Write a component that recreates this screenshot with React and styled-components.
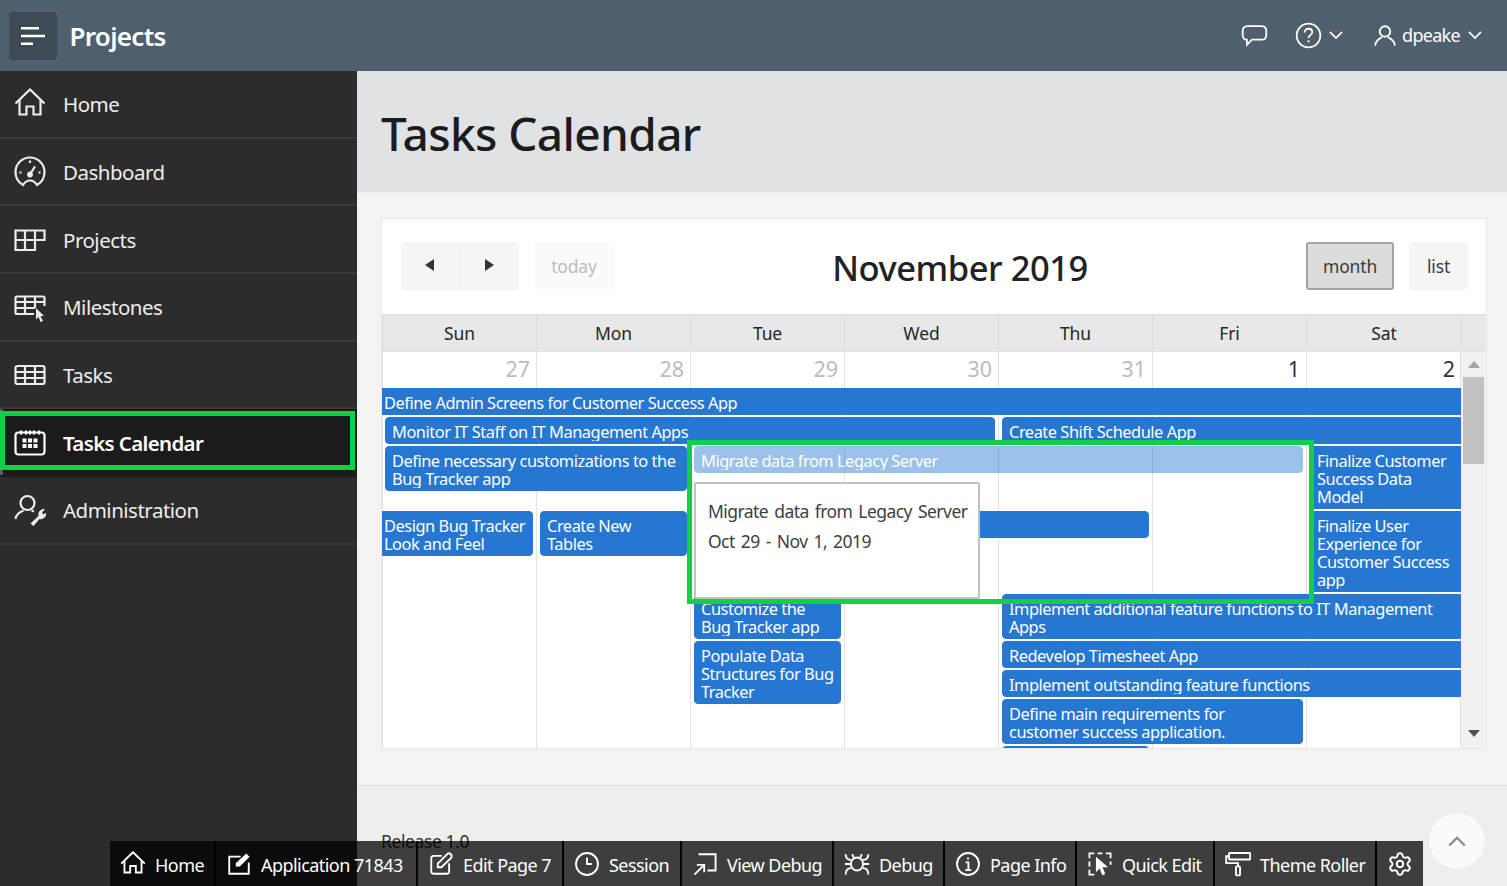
import React from "react";
import styled, { createGlobalStyle } from "styled-components";
import { Settings } from "lucide-react";

const Global = createGlobalStyle`
  html, body { margin: 0; padding: 0; height: 100%; overflow: hidden; }
  body { font-family: "Noto Sans", "Open Sans", sans-serif; color: #262626; background: #eeeeee; }
  * { box-sizing: border-box; }
`;

const Page = styled.div`
  width: 1507px; height: 886px; display: flex; flex-direction: column; position: relative; overflow: hidden;
`;
const Header = styled.header`
  height: 71px; background: #505f6d; display: flex; align-items: center; padding: 0 25px 0 9px; color: #fff; flex: none;
`;
const NavToggle = styled.button`
  width: 48px; height: 48px; border: 0; border-radius: 3px; background: #3e4a55; color: #fff; padding: 0;
  display: flex; align-items: center; justify-content: center;
`;
const Brand = styled.div`
  font-size: 26px; font-weight: 600; margin-left: 12.500px; letter-spacing: -0.7px; flex: 1; line-height: 50px;
`;
const HeadActions = styled.div`
  display: flex; align-items: center;
`;
const HeadGroup = styled.div`
  display: flex; align-items: center; gap: ${p => p.$gap || 0}px; margin-left: ${p => p.$ml || 0}px;
`;
const UserName = styled.span`
  font-size: 18px; letter-spacing: -0.7px; margin: -2px 3px 0 0;
`;

const Body = styled.div`
  flex: 1; display: flex; min-height: 0;
`;
const Sidebar = styled.nav`
  width: 357px; background: #2c2c2c; flex: none;
`;
const NavItem = styled.div`
  position: relative; height: 67.67px; display: flex; align-items: center; padding: 1px 0 0 14px; gap: 17px;
  color: ${p => p.$active ? "#fff" : "#ececec"};
  background: ${p => p.$active ? "linear-gradient(to right, #505f6d 3px, #1b1b1b 3px)" : "transparent"};
  border-bottom: 2px solid ${p => p.$active ? "#1b1b1b" : "#3a3a3a"};
  font-size: 20.500px; font-weight: ${p => p.$active ? 600 : 400}; letter-spacing: ${p => p.$active ? -0.65 : -0.5}px;
`;
const SideMark = styled.div`
  position: absolute; left: 0; right: 2px; top: 2px; height: 59px; border: 5px solid #0ed145; pointer-events: none;
`;

const Main = styled.main`
  flex: 1; display: flex; flex-direction: column; min-width: 0;
`;
const TitleBar = styled.div`
  height: 122px; flex: none; background: #dfe3e6; border-bottom: 1px solid #e7e9eb; display: flex; align-items: center; padding: 2px 25px 0 24px;
`;
const PageTitle = styled.h1`
  margin: 0; font-size: 46px; font-weight: 500; color: #1c1c1c; letter-spacing: -0.62px;
`;
const Content = styled.div`
  height: 593px; flex: none; background: #f3f3f3; padding: 25px 20px 0 24px; border-bottom: 1px solid #dddddd;
`;
const Card = styled.section`
  height: 531px; background: #fff; border: 1px solid #e8e8e8; position: relative; display: flex; flex-direction: column;
`;
const CalToolbar = styled.div`
  height: 95px; flex: none; display: flex; align-items: flex-start; justify-content: space-between; padding: 23px 18px 0 19px;
`;
const ToolGroup = styled.div`
  display: flex; gap: ${p => p.$gap || 0}px;
`;
const CalButton = styled.div`
  height: 48px; width: ${p => p.$w}px; display: flex; align-items: center; justify-content: center; font-size: 17.500px;
  border-radius: ${p => p.$radius || "3px"}; letter-spacing: -0.15px;
  color: ${p => p.$dim ? "#bdbdbd" : "#3a3a3a"};
  background: ${p => p.$on ? "#dcdcdc" : p.$dim ? "#fbfbfb" : "#f5f5f5"};
  border: ${p => p.$on ? "2px solid #a3a3a3" : "0"};
  border-left: ${p => p.$split ? "1px solid #efefef" : ""};
`;
const CalTitle = styled.h2`
  margin: 2px 0 0; font-size: 34.500px; font-weight: 500; line-height: 48px; color: #222; letter-spacing: -0.46px;
`;
const Arrow = styled.svg`
  width: 10px; height: 12px; fill: #333; margin: -2px 0 0 -2px;
`;
const HeadRow = styled.div`
  height: 38px; flex: none; display: grid; grid-template-columns: repeat(6, 154px) 155px 25px; background: #e8e8e8;
  border-top: 1px solid #dedede; border-bottom: 1px solid #dedede;
`;
const DayHead = styled.div`
  font-size: 17.500px; color: #262626; text-align: center; line-height: 36px; border-left: 1px solid #dcdcdc; letter-spacing: -0.1px;
`;
const ScrollWrap = styled.div`
  flex: 1; display: flex; min-height: 0;
`;
const Scroller = styled.div`
  width: 1079px; overflow: hidden; flex: none;
  background-image: linear-gradient(to right, #e2e2e2 1px, transparent 1px);
  background-size: 154px 100%;
  background-position: 154px 0;
  display: grid; grid-template-columns: repeat(6, 154px) 155px;
  grid-template-rows: 34px 27px 27px 63px 81px 45px 27px 27px 45px 27px;
  row-gap: 2px; align-content: start;
`;
const DayNum = styled.div`
  grid-row: 1; font-size: 21.500px; text-align: right; padding: 2px 6px 0 0; line-height: 30px;
  color: ${p => p.$muted ? "#bcbcbc" : "#333"};
`;
const Event = styled.div`
  grid-column: ${p => p.$col} / span ${p => p.$span || 1};
  grid-row: ${p => p.$row} / span ${p => p.$rows || 1};
  height: ${p => p.$h || 27}px;
  align-self: start;
  background: #2577d1; color: #fff; border: 1px solid #2577d1;
  margin-left: ${p => p.$flushL ? 0 : p.$sun ? 3 : 4}px;
  margin-right: ${p => p.$flushR ? 0 : 3}px;
  padding: 5px 0 0 ${p => p.$flushL ? 1 : 6}px;
  border-radius: ${p => p.$flushL ? "0" : "4px"} ${p => p.$flushR ? "0" : "4px"} ${p => p.$flushR ? "0" : "4px"} ${p => p.$flushL ? "0" : "4px"};
  opacity: ${p => p.$ghost ? .45 : 1};
  font-size: 16.400px; line-height: 18px; letter-spacing: -0.47px; white-space: nowrap;
`;
const EventText = styled.span`
  display: block; overflow: hidden; height: ${p => (p.$lines || 1) * 18}px;
`;
const Popover = styled.div`
  position: absolute; left: 312px; top: 263px; width: 286px; height: 117px; background: #fff; border: 2px solid #c2c2c2; border-radius: 2px;
  padding: 12px 12px; font-size: 17.500px; line-height: 30px; color: #404040; letter-spacing: -0.55px; word-spacing: 2px; white-space: nowrap;
`;
const CalMark = styled.div`
  position: absolute; left: 305px; top: 221px; width: 627px; height: 164px; border: 5px solid #0ed145; pointer-events: none;
`;
const ScrollBar = styled.div`
  flex: 1; background: #f1f1f1; display: flex; flex-direction: column; align-items: center; position: relative;
`;
const ScrollArrow = styled.svg`
  width: 12px; height: 7px; flex: none; margin: ${p => p.$m};
  fill: ${p => p.$dark ? "#505050" : "#a3a3a3"};
`;
const Thumb = styled.div`
  width: 21px; height: 87px; background: #c1c1c1; flex: none;
`;
const Spacer = styled.div`
  flex: 1;
`;
const Footer = styled.footer`
  flex: 1; background: #eeeeee; padding: 45px 0 0 24px; font-size: 17.500px; color: #333; letter-spacing: -0.4px; line-height: 20px;
`;
const DevBar = styled.div`
  position: absolute; left: 110px; bottom: 0; height: 45px; display: flex; background: rgba(0,0,0,.74); color: #fff;
`;
const DevItem = styled.div`
  width: ${p => p.$w}px; height: 45px; display: flex; align-items: center; padding-left: 10px; gap: 9px; flex: none;
  font-size: 18px; letter-spacing: -0.55px; white-space: nowrap; border-right: 2px solid #000;
  &:last-child { border-right: 0; }
`;
const DevLabel = styled.span`
  margin-top: 2px;
`;
const ToTop = styled.div`
  position: absolute; left: 1428px; top: 812px; width: 58px; height: 58px; border-radius: 50%; background: #fafafa; border: 1px solid #ebebeb;
  display: flex; align-items: center; justify-content: center; color: #8a8a8a;
`;

const glyphs = {
  home: <><path d="M1.500 15.500 16 1.500l14.500 14" /><path d="M5.500 12v14.500h7V18.500h7v8h7V12" /></>,
  dashboard: <><path d="M9 29C4.500 26.500 1.500 21.500 1.500 16a14.500 14.500 0 0 1 29 0c0 5.500-3 10.500-7.500 13-1.800-2.800-4-4.500-7-4.500s-5.200 1.700-7 4.500Z" /><path d="M16 4.500v2.500M5.500 16.500h2M26.500 16.500h-2M16.500 17.500 21 10.500" /><circle cx="16" cy="18.500" r="1.800" fill="currentColor" /></>,
  grid: <path d="M1.500 6.500h29V16H21v10H1.500ZM1.500 16H21M11 6.500V26M21 6.500V16" />,
  milestone: <><path d="M20 23H3q-1.500 0-1.500-1.500V7Q1.500 5.500 3 5.500h26q1.500 0 1.500 1.500v8M1.500 11h29M1.500 17H21M11 5.500V23M21 5.500V17" /><path d="M22 17l8 8h-3.500l2.500 5-2.500 1-2-5-2.500 2.500Z" fill="currentColor" stroke="none" /></>,
  table: <><rect x="1.500" y="7" width="29" height="18" rx="2" /><path d="M1.500 13h29M1.500 19h29M11 7v18M21 7v18" /></>,
  calendar: <><rect x="1.500" y="5.500" width="29" height="22" rx="3" /><path d="M7 3.500v4M12 3.500v4M16 3.500v4M20 3.500v4M25 3.500v4" /><path d="M8.500 11.500h4v4h-4ZM14 11.500h4v4h-4ZM19.500 11.500h4v4h-4ZM8.500 17h4v4h-4ZM14 17h4v4h-4ZM19.500 17h4v4h-4Z" fill="currentColor" stroke="none" /></>,
  admin: <><circle cx="13.500" cy="9" r="7" /><path d="M1.500 25c.5-4 4-7 8-8.500M17.500 16.500l2.500 1" /><path d="M16.500 29.500 24.500 22c-.8-4 2-7.500 6.500-7l-3 3.500 1.500 2 3-2c.3 4.500-3.500 7.500-7 6.500L19.500 32Z" fill="currentColor" stroke="none" /></>,
  appEdit: <><path d="M18 7H4v21h24V14" /><path d="M12 19v-4L25 3l4 4-12 12Z" fill="currentColor" stroke="none" /></>,
  pageEdit: <><path d="M17 6H7Q4 6 4 9v16q0 3 3 3h16q3 0 3-3V15" /><path d="M12 20v-4.500l12-12q2-1.500 4 .5t.5 4.500L16.500 20Z" /></>,
  clock: <><circle cx="16" cy="16" r="13.500" /><path d="M16 8v8h6" /></>,
  viewDebug: <><path d="M8 4h21v20H19" /><path d="M3 29 15 17M6 17h9v9" /></>,
  bug: <><ellipse cx="16" cy="16" rx="7.500" ry="8" /><path d="M2 4q0 7 7 7M30 4q0 7-7 7M1 16h7M31 16h-7M2 29q0-8 7-8M30 29q0-8-7-8M12 8l-2-4M20 8l2-4" /></>,
  info: <><circle cx="16" cy="16" r="13.500" /><path d="M16 8v2.500M13 14h3.500v9M12.500 23.500h7.500" /></>,
  quick: <><path d="M3 9V3h6M13 3h6M23 3h6v6M29 13v4M3 13v6M3 23v6h6" /><path d="M11 7l15 13h-7l3.500 8-3.500 2-3.500-8.500L11 26Z" fill="currentColor" stroke="none" /></>,
  roller: <><rect x="5" y="2.500" width="26" height="8" rx="1" /><path d="M5 6.500H1.500V15H16v4" /><rect x="13.500" y="19" width="5" height="11" rx="1" /></>,
  comment: <path d="M8 5h16q6 0 6 6v4q0 6-6 6H13l-6 6v-6q-5 0-5-6v-4q0-6 6-6Z" />,
  help: <><circle cx="16" cy="16" r="14" /><path d="M11.500 12.500c0-3 2-4.500 4.500-4.500s4.500 1.500 4.500 4c0 3.500-4.500 3.500-4.500 7M16 21.500v2.500" /></>,
  user: <><circle cx="16" cy="10" r="7" /><path d="M3 29c0-7 5-9.500 9-11.500M29 29c0-7-5-9.500-9-11.500" /></>,
};

const Icon = ({ name, size = 32, sw = 2.200 }) => (
  <svg width={size} height={size} viewBox="0 0 32 32" fill="none" stroke="currentColor" strokeWidth={sw} style={{ flex: "none" }}>
    {glyphs[name]}
  </svg>
);
const Chevron = ({ w = 14, up }) => (
  <svg width={w} height={w * 0.6} viewBox="0 0 15 9" fill="none" stroke="currentColor" strokeWidth="1.800" style={{ flex: "none" }}>
    <path d={up ? "M1 8l6.500-6.500L14 8" : "M1 1l6.500 6.500L14 1"} />
  </svg>
);

const nav = [
  ["home", "Home"], ["dashboard", "Dashboard"], ["grid", "Projects"], ["milestone", "Milestones"],
  ["table", "Tasks"], ["calendar", "Tasks Calendar", true], ["admin", "Administration"],
];
const days = ["Sun", "Mon", "Tue", "Wed", "Thu", "Fri", "Sat"];
const nums = [["27", 1], ["28", 1], ["29", 1], ["30", 1], ["31", 1], ["1"], ["2"]];
const events = [
  { row: 2, col: 1, span: 7, flushL: 1, flushR: 1, lines: [1, "Define Admin Screens for Customer Success App"] },
  { row: 3, col: 1, span: 4, sun: 1, lines: [1, "Monitor IT Staff on IT Management Apps"] },
  { row: 3, col: 5, span: 3, flushR: 1, lines: [1, "Create Shift Schedule App"] },
  { row: 4, col: 1, span: 2, sun: 1, h: 45, lines: [2, <>Define necessary customizations to the<br />Bug Tracker app</>] },
  { row: 4, col: 3, span: 4, ghost: 1, lines: [1, "Migrate data from Legacy Server"] },
  { row: 4, col: 7, flushR: 1, h: 63, lines: [3, <>Finalize Customer<br />Success Data<br />Model</>] },
  { row: 5, col: 1, flushL: 1, h: 45, lines: [2, <>Design Bug Tracker<br />Look and Feel</>] },
  { row: 5, col: 2, h: 45, lines: [2, <>Create New<br />Tables</>] },
  { row: 5, col: 3, span: 3, lines: [1, ""] },
  { row: 5, col: 7, flushR: 1, h: 81, lines: [4, <>Finalize User<br />Experience for<br />Customer Success<br />app</>] },
  { row: 6, col: 3, h: 45, lines: [2, <>Customize the<br />Bug Tracker app</>] },
  { row: 6, col: 5, span: 3, flushR: 1, h: 45, lines: [2, <>Implement additional feature functions to IT Management<br />Apps</>] },
  { row: 7, col: 3, rows: 3, h: 63, lines: [3, <>Populate Data<br />Structures for Bug<br />Tracker</>] },
  { row: 7, col: 5, span: 3, flushR: 1, lines: [1, "Redevelop Timesheet App"] },
  { row: 8, col: 5, span: 3, flushR: 1, lines: [1, "Implement outstanding feature functions"] },
  { row: 9, col: 5, span: 2, h: 45, lines: [2, <>Define main requirements for<br />customer success application.</>] },
  { row: 10, col: 5, lines: [1, ""] },
];
const tools = [
  ["home", "Home", 106], ["appEdit", "Application 71843", 202], ["pageEdit", "Edit Page 7", 146], ["clock", "Session", 118],
  ["viewDebug", "View Debug", 152], ["bug", "Debug", 111], ["info", "Page Info", 132], ["quick", "Quick Edit", 138], ["roller", "Theme Roller", 162],
];

export default function App() {
  return (
    <Page>
      <Global />
      <Header>
        <NavToggle aria-label="Menu">
          <svg width="24" height="20" viewBox="0 0 24 20" fill="#fff"><path d="M0 1h18v2.400H0zM0 8.800h24v2.400H0zM0 16.600h12V19H0z" /></svg>
        </NavToggle>
        <Brand>Projects</Brand>
        <HeadActions>
          <Icon name="comment" size={27} sw={2.100} />
          <HeadGroup $ml={27} $gap={7}>
            <Icon name="help" size={27} sw={2.100} />
            <Chevron />
          </HeadGroup>
          <HeadGroup $ml={30} $gap={5}>
            <Icon name="user" size={24} sw={2.400} />
            <UserName>dpeake</UserName>
            <Chevron />
          </HeadGroup>
        </HeadActions>
      </Header>
      <Body>
        <Sidebar>
          {nav.map(([icon, label, active]) => (
            <NavItem key={label} $active={active}>
              <Icon name={icon} />
              {label}
              {active && <SideMark />}
            </NavItem>
          ))}
        </Sidebar>
        <Main>
          <TitleBar><PageTitle>Tasks Calendar</PageTitle></TitleBar>
          <Content>
            <Card>
              <CalToolbar>
                <ToolGroup $gap={15}>
                  <ToolGroup>
                    <CalButton $w={59} $radius="3px 0 0 3px"><Arrow viewBox="0 0 10 12"><path d="M9 0v12L0 6Z" /></Arrow></CalButton>
                    <CalButton $w={59} $radius="0 3px 3px 0" $split><Arrow viewBox="0 0 10 12"><path d="M1 0v12l9-6Z" /></Arrow></CalButton>
                  </ToolGroup>
                  <CalButton $w={80} $dim>today</CalButton>
                </ToolGroup>
                <CalTitle>November 2019</CalTitle>
                <ToolGroup $gap={15}>
                  <CalButton $w={88} $on>month</CalButton>
                  <CalButton $w={59}>list</CalButton>
                </ToolGroup>
              </CalToolbar>
              <HeadRow>
                {days.map(d => <DayHead key={d}>{d}</DayHead>)}
                <DayHead />
              </HeadRow>
              <ScrollWrap>
                <Scroller>
                  {nums.map(([n, muted]) => <DayNum key={n} $muted={muted}>{n}</DayNum>)}
                  {events.map((e, i) => (
                    <Event key={i} $row={e.row} $rows={e.rows} $col={e.col} $span={e.span} $h={e.h} $flushL={e.flushL} $flushR={e.flushR} $sun={e.sun} $ghost={e.ghost}>
                      <EventText $lines={e.lines[0]}>{e.lines[1]}</EventText>
                    </Event>
                  ))}
                </Scroller>
                <ScrollBar>
                  <ScrollArrow viewBox="0 0 12 7" $m="9px 0 9px"><path d="M6 0l6 7H0Z" /></ScrollArrow>
                  <Thumb />
                  <Spacer />
                  <ScrollArrow viewBox="0 0 12 7" $m="0 0 11px" $dark><path d="M6 7 0 0h12Z" /></ScrollArrow>
                </ScrollBar>
              </ScrollWrap>
              <Popover>
                Migrate data from Legacy Server<br />Oct 29 - Nov 1, 2019
              </Popover>
              <CalMark />
            </Card>
          </Content>
          <Footer>Release 1.0</Footer>
        </Main>
      </Body>
      <DevBar>
        {tools.map(([icon, label, w]) => (
          <DevItem key={label} $w={w}><Icon name={icon} size={26} sw={2.300} /><DevLabel>{label}</DevLabel></DevItem>
        ))}
        <DevItem $w={46}><Settings size={26} strokeWidth={1.800} /></DevItem>
      </DevBar>
      <ToTop><Chevron w={18} up /></ToTop>
    </Page>
  );
}
